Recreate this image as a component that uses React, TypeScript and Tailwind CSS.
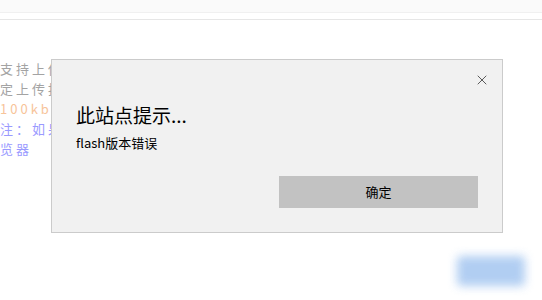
import { X } from 'lucide-react';

const LINES = [
  { text: '支持上传jpg、png、gif格式图片', color: 'text-[#a3a3a3]' },
  { text: '定上传按钮后即可完成上传', color: 'text-[#a3a3a3]' },
  { text: '100kb', color: 'text-[#f7c49a]' },
  { text: '注：如果无法上传，请更换浏', color: 'text-[#9a9aff]' },
  { text: '览器', color: 'text-[#9a9aff]' },
];

export default function App() {
  return (
    <div
      className="relative w-[542px] h-[300px] overflow-hidden bg-white"
      style={{ fontFamily: '"Noto Sans CJK SC", "Noto Sans", sans-serif' }}
    >
      {/* page header strip */}
      <div className="h-[13px] bg-[#fafafa] border-b border-[#f0f0f0]" />
      <div className="h-[7px] border-b border-[#e6e6e6]" />

      {/* page content, mostly hidden by the dialog */}
      <div className="flex flex-col pt-[39px]">
        {LINES.map((line) => (
          <div
            key={line.text}
            className={`h-[20px] leading-[20px] text-[13px] tracking-[3px] whitespace-nowrap ${line.color}`}
          >
            {line.text}
          </div>
        ))}
      </div>

      {/* blurred submit button */}
      <div className="absolute left-[457px] top-[256px] w-[68px] h-[30px] rounded bg-[#a9c9f1] blur-[5px] opacity-90" />

      {/* alert dialog */}
      <div className="absolute left-[51px] top-[59px] w-[452px] h-[174px] bg-[#f1f1f1] border border-[#cbcbcb] flex flex-col">
        <div className="flex justify-end pt-[12px] pr-[12px]">
          <X size={16} strokeWidth={1.1} className="text-[#222]" />
        </div>
        <div className="pl-[24px] mt-[13px] text-[19px] leading-[28px] text-black">此站点提示...</div>
        <div className="pl-[24px] mt-[4px] text-[13px] leading-[20px] text-black">flash版本错误</div>
        <div className="flex justify-end pr-[24px] mt-auto mb-[24px]">
          <button className="w-[199px] h-[32px] bg-[#c2c2c2] text-[13px] text-black">确定</button>
        </div>
      </div>
    </div>
  );
}
